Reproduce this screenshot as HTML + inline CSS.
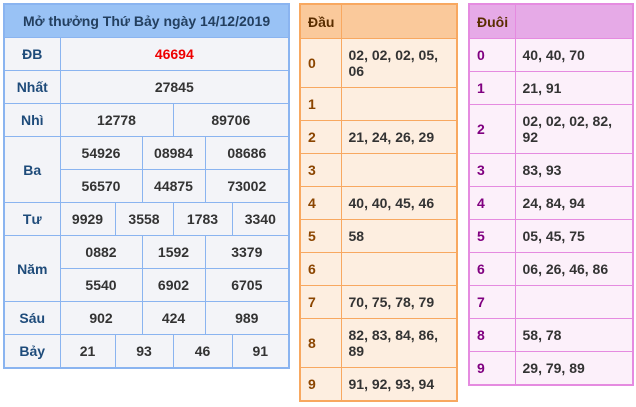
<!DOCTYPE html>
<html><head><meta charset="utf-8"><style>
body{margin:0;width:636px;height:407px;background:#fff;font-family:"Liberation Sans",Arial,sans-serif;font-weight:bold;font-size:14px;color:#333;position:relative;overflow:hidden}
table{position:absolute;border-collapse:collapse;table-layout:fixed}
td{padding:0;text-align:center;vertical-align:middle;height:32px;line-height:16px}
#kq{left:3px;top:3px;border:2px solid #8ab4f0;background:#f3f4f8}
#kq td{border:1px solid #8ab4f0}
#kq .lb{color:#1e4b7a;font-size:14px}
#kq .h{background:#99c2f5;color:#233f5f;font-size:14px;height:32px}
#dau{left:299px;top:3px;border:2px solid #f8a860;background:#fdeee0;width:159px}
#dau td{border:1px solid #f8a860;text-align:left;padding-left:7px}
#dau .h{background:#fac99b}
#dau .lb{color:#8b4500}
#duoi{left:468px;top:3px;border:2px solid #e58be0;background:#fcf0fa;width:166px}
#duoi td{border:1px solid #e58be0;text-align:left;padding-left:7px}
#duoi .h{background:#e6aae7}
#duoi .lb{color:#800080}
.h td{color:#5a2d00}
</style></head><body>
<table id="kq" style="width:286px">
<colgroup><col style="width:56px"><col style="width:55px"><col style="width:27px"><col style="width:31px"><col style="width:32px"><col style="width:27px"><col style="width:57px"></colgroup>
<tr><td colspan="7" class="h">Mở thưởng Thứ Bảy ngày 14/12/2019</td></tr>
<tr><td class="lb">ĐB</td><td colspan="6" style="color:#e00">46694</td></tr>
<tr><td class="lb">Nhất</td><td colspan="6">27845</td></tr>
<tr><td class="lb">Nhì</td><td colspan="3">12778</td><td colspan="3">89706</td></tr>
<tr><td class="lb" rowspan="2">Ba</td><td colspan="2">54926</td><td colspan="2">08984</td><td colspan="2">08686</td></tr>
<tr><td colspan="2">56570</td><td colspan="2">44875</td><td colspan="2">73002</td></tr>
<tr><td class="lb">Tư</td><td>9929</td><td colspan="2">3558</td><td colspan="2">1783</td><td>3340</td></tr>
<tr><td class="lb" rowspan="2">Năm</td><td colspan="2">0882</td><td colspan="2">1592</td><td colspan="2">3379</td></tr>
<tr><td colspan="2">5540</td><td colspan="2">6902</td><td colspan="2">6705</td></tr>
<tr><td class="lb">Sáu</td><td colspan="2">902</td><td colspan="2">424</td><td colspan="2">989</td></tr>
<tr><td class="lb">Bảy</td><td>21</td><td colspan="2">93</td><td colspan="2">46</td><td>91</td></tr>
</table>
<table id="dau">
<colgroup><col style="width:41px"><col></colgroup>
<tr class="h"><td style="color:#5a2d00;height:33px">Đầu</td><td></td></tr>
<tr><td class="lb" style="height:48px">0</td><td>02, 02, 02, 05,<br>06</td></tr>
<tr><td class="lb">1</td><td></td></tr>
<tr><td class="lb">2</td><td>21, 24, 26, 29</td></tr>
<tr><td class="lb">3</td><td></td></tr>
<tr><td class="lb">4</td><td>40, 40, 45, 46</td></tr>
<tr><td class="lb">5</td><td>58</td></tr>
<tr><td class="lb">6</td><td></td></tr>
<tr><td class="lb">7</td><td>70, 75, 78, 79</td></tr>
<tr><td class="lb" style="height:48px">8</td><td>82, 83, 84, 86,<br>89</td></tr>
<tr><td class="lb">9</td><td>91, 92, 93, 94</td></tr>
</table>
<table id="duoi">
<colgroup><col style="width:46px"><col></colgroup>
<tr class="h"><td style="color:#5a2d00;height:33px">Đuôi</td><td></td></tr>
<tr><td class="lb">0</td><td>40, 40, 70</td></tr>
<tr><td class="lb">1</td><td>21, 91</td></tr>
<tr><td class="lb" style="height:48px">2</td><td>02, 02, 02, 82,<br>92</td></tr>
<tr><td class="lb">3</td><td>83, 93</td></tr>
<tr><td class="lb">4</td><td>24, 84, 94</td></tr>
<tr><td class="lb">5</td><td>05, 45, 75</td></tr>
<tr><td class="lb">6</td><td>06, 26, 46, 86</td></tr>
<tr><td class="lb">7</td><td></td></tr>
<tr><td class="lb">8</td><td>58, 78</td></tr>
<tr><td class="lb">9</td><td>29, 79, 89</td></tr>
</table>
</body></html>
